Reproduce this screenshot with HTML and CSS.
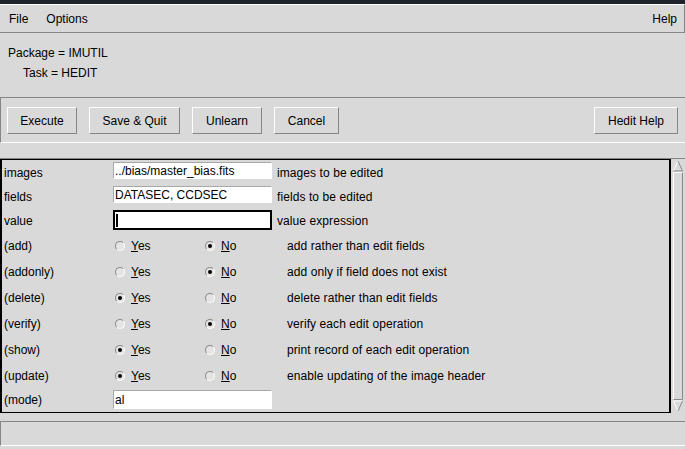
FILE: index.html
```html
<!DOCTYPE html>
<html>
<head>
<meta charset="utf-8">
<link rel="stylesheet" href="styles.css">
</head>
<body>
<div class="topbar"></div>
<div class="menubar">
  <span class="menu">File</span>
  <span class="menu">Options</span>
  <span class="menu help">Help</span>
</div>
<div class="info">
  <div class="line">Package = IMUTIL</div>
  <div class="line task">Task = HEDIT</div>
</div>
<div class="buttonbar">
  <div class="btn b-exec">Execute</div>
  <div class="btn b-save">Save &amp; Quit</div>
  <div class="btn b-unlearn">Unlearn</div>
  <div class="btn b-cancel">Cancel</div>
  <div class="btn b-help">Hedit Help</div>
</div>
<div class="main">
  <div class="panel">
    <div class="row erow">
      <div class="label">images</div>
      <div class="entry">../bias/master_bias.fits</div>
      <div class="desc">images to be edited</div>
    </div>
    <div class="row erow">
      <div class="label">fields</div>
      <div class="entry">DATASEC, CCDSEC</div>
      <div class="desc">fields to be edited</div>
    </div>
    <div class="row erow">
      <div class="label">value</div>
      <div class="entry focus"><span class="caret"></span></div>
      <div class="desc">value expression</div>
    </div>
    <div class="row rrow">
      <div class="label">(add)</div>
      <div class="opt yes"><span class="radio"></span><span><u>Y</u>es</span></div>
      <div class="opt no"><span class="radio on"></span><span><u>N</u>o</span></div>
      <div class="desc">add rather than edit fields</div>
    </div>
    <div class="row rrow">
      <div class="label">(addonly)</div>
      <div class="opt yes"><span class="radio"></span><span><u>Y</u>es</span></div>
      <div class="opt no"><span class="radio on"></span><span><u>N</u>o</span></div>
      <div class="desc">add only if field does not exist</div>
    </div>
    <div class="row rrow">
      <div class="label">(delete)</div>
      <div class="opt yes"><span class="radio on"></span><span><u>Y</u>es</span></div>
      <div class="opt no"><span class="radio"></span><span><u>N</u>o</span></div>
      <div class="desc">delete rather than edit fields</div>
    </div>
    <div class="row rrow">
      <div class="label">(verify)</div>
      <div class="opt yes"><span class="radio"></span><span><u>Y</u>es</span></div>
      <div class="opt no"><span class="radio on"></span><span><u>N</u>o</span></div>
      <div class="desc">verify each edit operation</div>
    </div>
    <div class="row rrow">
      <div class="label">(show)</div>
      <div class="opt yes"><span class="radio on"></span><span><u>Y</u>es</span></div>
      <div class="opt no"><span class="radio"></span><span><u>N</u>o</span></div>
      <div class="desc">print record of each edit operation</div>
    </div>
    <div class="row rrow">
      <div class="label">(update)</div>
      <div class="opt yes"><span class="radio on"></span><span><u>Y</u>es</span></div>
      <div class="opt no"><span class="radio"></span><span><u>N</u>o</span></div>
      <div class="desc">enable updating of the image header</div>
    </div>
    <div class="row mrow">
      <div class="label">(mode)</div>
      <div class="entry mode">al</div>
    </div>
  </div>
  <div class="scrollbar">
    <svg width="14" height="254" viewBox="0 0 14 254">
      <polygon points="7,2 2.5,12 11.5,12" fill="#d9d9d9"/>
      <path d="M7 2 L2.5 12" stroke="#ffffff" fill="none"/>
      <path d="M7 2 L11.5 12 L2.5 12" stroke="#8a8a8a" fill="none"/>
      <rect x="2.5" y="13.5" width="9" height="227" fill="#d9d9d9"/>
      <path d="M2.5 240.5 V13.5 H11.5" stroke="#ffffff" fill="none"/>
      <path d="M11.5 13.5 V240.5 H2.5" stroke="#8a8a8a" fill="none"/>
      <polygon points="2.5,242 11.5,242 7,252" fill="#d9d9d9"/>
      <path d="M2.5 242 L11.5 242 M2.5 242 L7 252" stroke="#ffffff" fill="none"/>
      <path d="M11.5 242 L7 252" stroke="#8a8a8a" fill="none"/>
    </svg>
  </div>
</div>
<div class="status"></div>
</body>
</html>
```
FILE: styles.css
```css
html, body {
  margin: 0;
  padding: 0;
}
body {
  width: 685px;
  height: 449px;
  overflow: hidden;
  background: #d9d9d9;
  color: #000;
  font-family: "Liberation Sans", Arial, sans-serif;
  font-size: 12px;
}
.topbar {
  height: 4px;
  background: #1f232a;
}
.menubar {
  height: 26px;
  border-top: 1px solid #ffffff;
  border-bottom: 1px solid #858585;
  border-right: 1px solid #858585;
  display: flex;
  align-items: center;
  padding: 1px 7px 0 9px;
  box-sizing: content-box;
}
.menu {
  margin-right: 18px;
}
.menu.help {
  margin-left: auto;
  margin-right: 0;
}
.info {
  height: 54px;
  padding-top: 10px;
}
.line {
  height: 20px;
  line-height: 20px;
  padding-left: 8px;
}
.line.task {
  padding-left: 23px;
}
.buttonbar {
  border-top: 1px solid #858585;
  border-bottom: 1px solid #ffffff;
  border-left: 1px solid #858585;
  display: flex;
  align-items: flex-start;
  padding-top: 9px;
  padding-left: 6px;
  box-sizing: border-box;
  height: 46px;
  gap: 12px;
}
.btn {
  height: 27px;
  box-sizing: border-box;
  border-top: 1px solid #ffffff;
  border-left: 1px solid #ffffff;
  border-bottom: 1px solid #858585;
  border-right: 1px solid #858585;
  display: flex;
  align-items: center;
  justify-content: center;
  padding-top: 1px;
}
.b-exec { width: 70px; }
.b-save { width: 91px; }
.b-unlearn { width: 70px; }
.b-cancel { width: 65px; }
.b-help { width: 84px; margin-left: auto; margin-right: 7px; }
.main {
  margin-top: 15px;
  display: flex;
  border-top: 1px solid #858585;
}
.panel {
  width: 671px;
  box-sizing: border-box;
  border: 1px solid #000;
  border-left-width: 2px;
  border-right-width: 2px;
  height: 254px;
}
.scrollbar {
  width: 14px;
  height: 254px;
}
.scrollbar svg {
  display: block;
}
.row {
  display: flex;
  padding-left: 2px;
  overflow: hidden;
}
.label {
  width: 109px;
}
.erow {
  height: 24px;
  line-height: 26px;
}
.rrow {
  height: 26px;
  line-height: 28px;
  align-items: flex-start;
}
.mrow {
  height: 23px;
  line-height: 25px;
}
.entry {
  width: 159px;
  height: 17px;
  box-sizing: border-box;
  margin-top: 2px;
  background: #ffffff;
  border-top: 1px solid #a8a8a8;
  border-left: 1px solid #a8a8a8;
  border-bottom: 1px solid #ffffff;
  border-right: 1px solid #ffffff;
  padding-left: 1px;
  line-height: 17px;
  white-space: nowrap;
  overflow: hidden;
}
.entry.focus {
  height: 20px;
  border: 2px solid #000;
  position: relative;
}
.caret {
  position: absolute;
  left: 1px;
  top: 2px;
  width: 2px;
  height: 13px;
  background: #000;
}
.entry.mode {
  height: 19px;
  line-height: 19px;
}
.desc {
  margin-left: 5px;
  white-space: nowrap;
  letter-spacing: 0.08px;
}
.opt {
  display: flex;
  align-items: center;
  height: 28px;
}
.opt.yes {
  width: 90px;
  padding-left: 2px;
}
.opt.no {
  width: 82px;
}
.rrow .desc {
  margin-left: 0;
}
.radio {
  width: 8px;
  height: 8px;
  border-radius: 50%;
  border: 1px solid;
  border-color: #8a8a8a #ffffff #ffffff #8a8a8a;
  background: #e4e4e4;
  margin-right: 6px;
  position: relative;
}
.radio.on::after {
  content: "";
  position: absolute;
  left: 2px;
  top: 2px;
  width: 4px;
  height: 4px;
  border-radius: 50%;
  background: #000;
}
.status {
  margin-top: 8px;
  height: 25px;
  box-sizing: border-box;
  border-top: 1px solid #858585;
  border-bottom: 1px solid #ffffff;
  border-left: 1px solid #858585;
}
```
